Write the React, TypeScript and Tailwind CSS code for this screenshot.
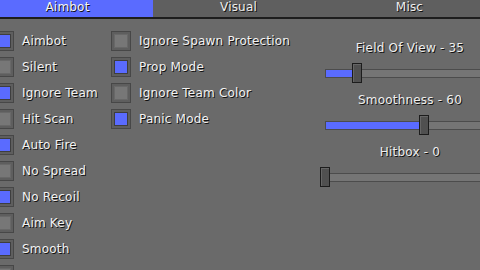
import React from 'react';

const font = { fontFamily: '"DejaVu Sans", Verdana, sans-serif' };

const shadow = '[text-shadow:1px_1px_0_#111]';

interface CheckProps {
  label: string;
  checked: boolean;
}

const Check: React.FC<CheckProps> = ({ label, checked }) => (
  <div className="flex items-center gap-2 h-5">
    <div className="w-5 h-5 shrink-0 border border-[#474747] bg-[#5e5e5e] p-[2px]">
      <div
        className={
          checked
            ? 'w-full h-full bg-[#5a6bff] border border-[#3e3e3e]'
            : 'w-full h-full bg-[#777777] border border-[#686868]'
        }
      />
    </div>
    <span className={`text-[12px] leading-[14px] tracking-[0.2px] text-[#f2f2f2] whitespace-nowrap ${shadow}`}>
      {label}
    </span>
  </div>
);

interface SliderProps {
  label: string;
  frac: number;
}

const Slider: React.FC<SliderProps> = ({ label, frac }) => {
  const pos = Math.round(frac * 165);
  return (
    <div className="flex flex-col">
      <div className={`h-[14px] text-[12px] leading-[14px] tracking-[0.2px] text-center text-[#eeeeee] whitespace-nowrap ${shadow}`}>
        {label}
      </div>
      <div className="relative h-5 mt-2 mb-[10px]">
        <div className="absolute left-0 right-0 top-[6px] h-[9px] border border-[#4c4c4c] bg-[#757575]">
          <div className="h-full bg-[#5a6bff]" style={{ width: pos }} />
        </div>
        <div
          className="absolute top-0 w-[10px] h-5 border border-[#1c1c1c] bg-[#505050] shadow-[inset_1px_1px_0_#666666]"
          style={{ left: pos - 5 }}
        />
      </div>
    </div>
  );
};

const left = [
  { label: 'Aimbot', checked: true },
  { label: 'Silent', checked: false },
  { label: 'Ignore Team', checked: true },
  { label: 'Hit Scan', checked: false },
  { label: 'Auto Fire', checked: true },
  { label: 'No Spread', checked: false },
  { label: 'No Recoil', checked: true },
  { label: 'Aim Key', checked: false },
  { label: 'Smooth', checked: true },
  { label: '', checked: false },
];

const middle = [
  { label: 'Ignore Spawn Protection', checked: false },
  { label: 'Prop Mode', checked: true },
  { label: 'Ignore Team Color', checked: false },
  { label: 'Panic Mode', checked: true },
];

export default function App() {
  return (
    <div className="w-[480px] h-[270px] overflow-hidden bg-[#6a6a6a]" style={font}>
      <div className="ml-[-18px] w-[513px]">
        {/* Tabs */}
        <div className="flex h-[17px] bg-[#5f5f5f]">
          <div className={`w-[171px] bg-[#5a6bff] text-center text-[12px] leading-[15px] tracking-[0.2px] text-[#f4f4f4] ${shadow}`}>
            Aimbot
          </div>
          <div className={`w-[171px] text-center text-[12px] leading-[15px] tracking-[0.2px] text-[#eeeeee] ${shadow}`}>Visual</div>
          <div className={`w-[171px] text-center text-[12px] leading-[15px] tracking-[0.2px] text-[#eeeeee] ${shadow}`}>Misc</div>
        </div>
        <div className="h-[2px] bg-[#1d1d1d]" />

        {/* Body */}
        <div className="flex">
          <div className="w-[117px] ml-3 pt-3 flex flex-col gap-[6px]">
            {left.map((c, i) => (
              <Check key={i} label={c.label} checked={c.checked} />
            ))}
          </div>
          <div className="w-[214px] pt-3 flex flex-col gap-[6px]">
            {middle.map((c) => (
              <Check key={c.label} label={c.label} checked={c.checked} />
            ))}
          </div>
          <div className="w-[170px] pt-[22px] flex flex-col">
            <Slider label="Field Of View - 35" frac={35 / 180} />
            <Slider label="Smoothness - 60" frac={0.6} />
            <Slider label="Hitbox - 0" frac={0} />
          </div>
        </div>
      </div>
    </div>
  );
}
